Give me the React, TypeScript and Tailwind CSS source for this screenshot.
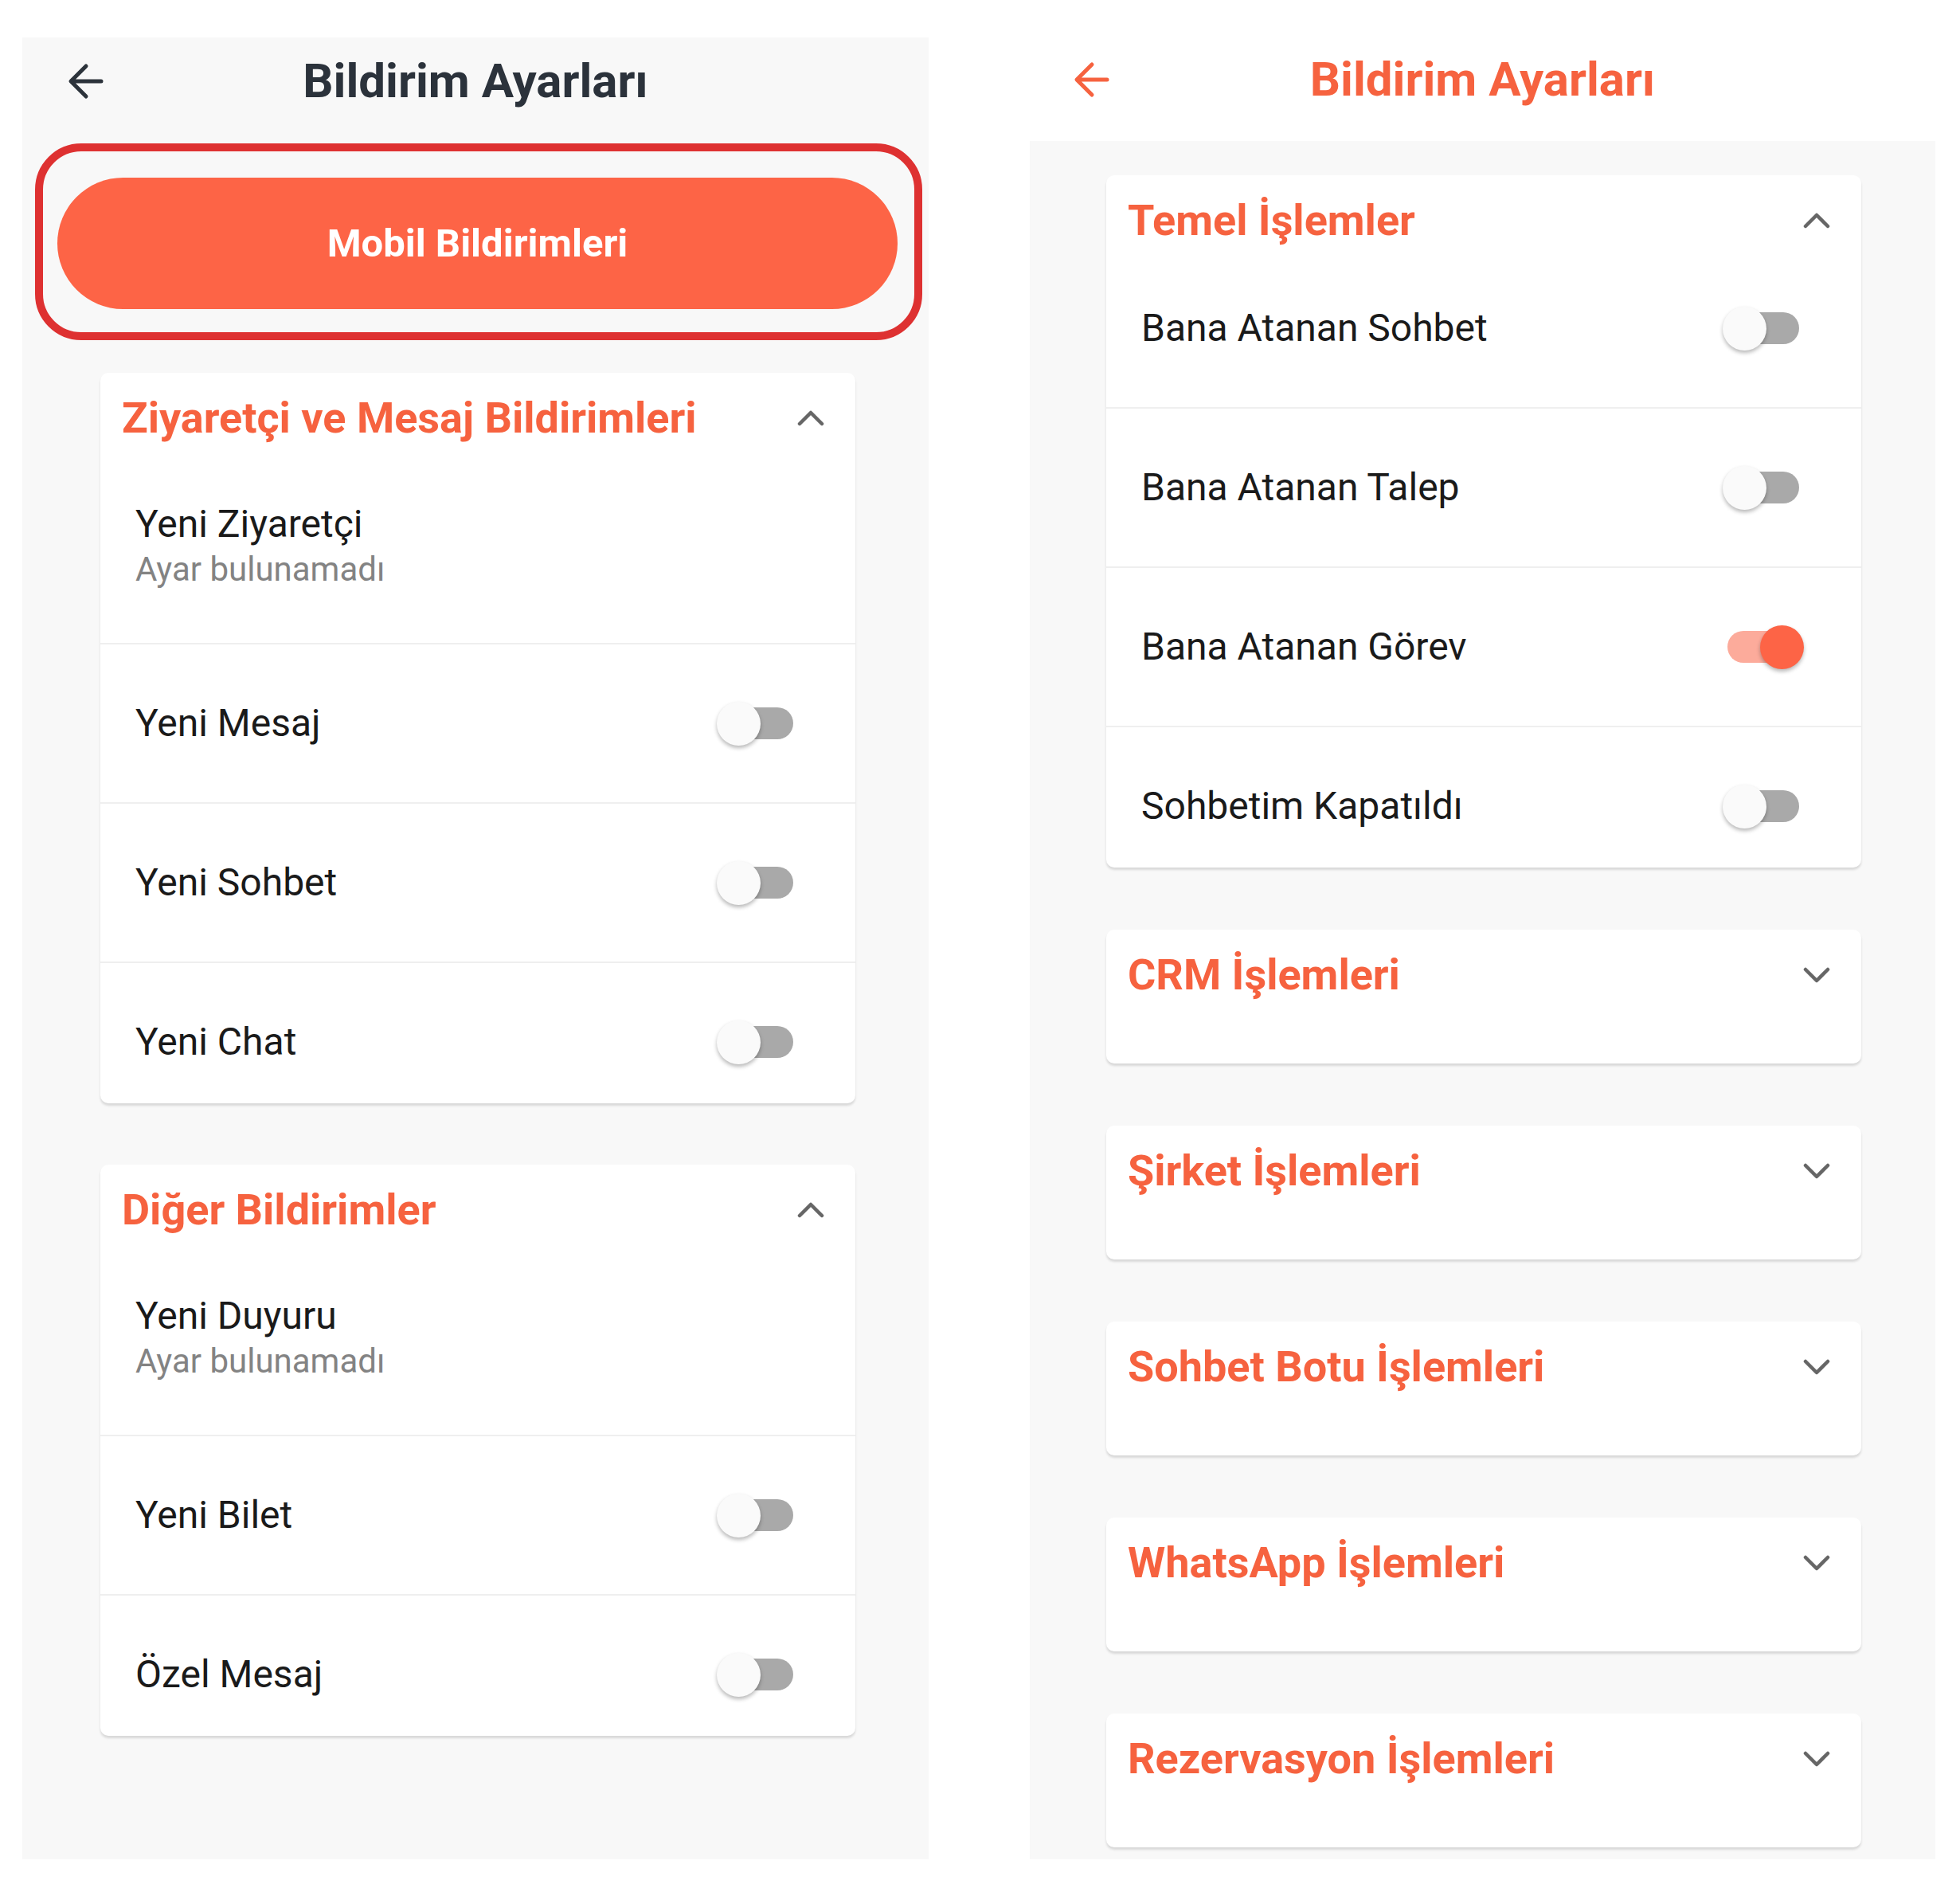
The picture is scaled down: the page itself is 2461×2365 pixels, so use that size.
import React from "react";

const CORAL = "text-[#f6623f]";

function BackArrow({ color }: { color: string }) {
  return (
    <svg width="46" height="46" viewBox="0 0 46 46" fill="none">
      <path d="M42 23H5M23 4L4 23l19 19" stroke={color} strokeWidth="5" strokeLinecap="round" strokeLinejoin="round" />
    </svg>
  );
}

function Chevron({ up }: { up: boolean }) {
  return (
    <svg width="34" height="20" viewBox="0 0 34 20" fill="none">
      {up ? (
        <path d="M3 17L17 3l14 14" stroke="#666666" strokeWidth="4.5" strokeLinecap="round" strokeLinejoin="round" />
      ) : (
        <path d="M3 3l14 14L31 3" stroke="#666666" strokeWidth="4.5" strokeLinecap="round" strokeLinejoin="round" />
      )}
    </svg>
  );
}

function Toggle({ on }: { on: boolean }) {
  return (
    <div className="relative w-[102px] h-[56px] shrink-0">
      <div
        className={
          "absolute left-[6px] right-[6px] top-[8px] h-[40px] rounded-full " +
          (on ? "bg-[#fcab9b]" : "bg-[#a9a9a9]")
        }
      />
      <div
        className={
          "absolute top-[1px] w-[55px] h-[55px] rounded-full shadow-[0_3px_5px_rgba(0,0,0,0.28)] " +
          (on ? "right-0 bg-[#fd6446]" : "left-0 bg-[#fafafa]")
        }
      />
    </div>
  );
}

type Row = { label: string; sub?: string; on?: boolean };

function CardHeader({ title, open }: { title: string; open: boolean }) {
  return (
    <div className="h-[93px] pt-[20px] pl-[27px] pr-[39px] flex items-center justify-between">
      <div className={"font-bold text-[54px] leading-none " + CORAL}>{title}</div>
      <Chevron up={open} />
    </div>
  );
}

function Card({ title, rows }: { title: string; rows: Row[] }) {
  return (
    <div className="bg-white rounded-[10px] shadow-[0_3px_3px_rgba(0,0,0,0.13)] overflow-hidden">
      <CardHeader title={title} open={true} />
      {rows.map((r, i) => {
        const last = i === rows.length - 1;
        if (r.sub) {
          return (
            <div key={i} className="h-[248px] border-b-2 border-[#efefef] pl-[44px] pt-[68px]">
              <div className="text-[48px] leading-[58px] text-[#1a1a1a]">{r.label}</div>
              <div className="mt-[3px] text-[42px] leading-[50px] text-[#838383]">{r.sub}</div>
            </div>
          );
        }
        return (
          <div
            key={i}
            className={
              "flex items-center justify-between pl-[44px] pr-[72px] " +
              (last ? "h-[176px] pt-[22px]" : "h-[200px] border-b-2 border-[#efefef]")
            }
          >
            <div className="text-[48px] leading-none text-[#1a1a1a]">{r.label}</div>
            <Toggle on={!!r.on} />
          </div>
        );
      })}
    </div>
  );
}

function Collapsed({ title }: { title: string }) {
  return (
    <div className="bg-white rounded-[10px] shadow-[0_3px_3px_rgba(0,0,0,0.13)] h-[168px]">
      <CardHeader title={title} open={false} />
    </div>
  );
}

export default function App() {
  return (
    <div
      className="w-[2461px] h-[2365px] bg-white flex items-start pl-[28px] pt-[47px] gap-[127px]"
      style={{ fontFamily: "Roboto, 'Noto Sans', sans-serif" }}
    >
      {/* Left panel */}
      <div className="w-[1138px] h-[2287px] bg-[#f8f8f8] flex flex-col">
        <div className="relative h-[110px] flex items-center justify-center">
          <div className="absolute left-[57px] top-[32px]">
            <BackArrow color="#2c333b" />
          </div>
          <div className="font-bold text-[60px] leading-none text-[#2b323b]">Bildirim Ayarları</div>
        </div>
        <div className="mt-[23px] ml-[16px] mr-[8px] border-[10px] border-[#de3131] rounded-[58px] pl-[18px] pr-[21px] pt-[33px] pb-[29px]">
          <div className="h-[165px] rounded-full bg-[#fd6446] flex items-center justify-center">
            <span className="font-bold text-[49px] leading-none text-white">Mobil Bildirimleri</span>
          </div>
        </div>
        <div className="ml-[98px] mr-[92px] mt-[41px] flex flex-col gap-[77px]">
          <Card
            title="Ziyaretçi ve Mesaj Bildirimleri"
            rows={[
              { label: "Yeni Ziyaretçi", sub: "Ayar bulunamadı" },
              { label: "Yeni Mesaj" },
              { label: "Yeni Sohbet" },
              { label: "Yeni Chat" },
            ]}
          />
          <Card
            title="Diğer Bildirimler"
            rows={[
              { label: "Yeni Duyuru", sub: "Ayar bulunamadı" },
              { label: "Yeni Bilet" },
              { label: "Özel Mesaj" },
            ]}
          />
        </div>
      </div>

      {/* Right panel */}
      <div className="w-[1137px] h-[2287px] flex flex-col">
        <div className="relative h-[130px] pb-[24px] flex items-center justify-center bg-white">
          <div className="absolute left-[55px] top-[30px]">
            <BackArrow color="#f6623f" />
          </div>
          <div className={"font-bold text-[60px] leading-none " + CORAL}>Bildirim Ayarları</div>
        </div>
        <div className="flex-1 bg-[#f8f8f8] pt-[43px] pl-[96px] pr-[93px] flex flex-col gap-[78px]">
          <Card
            title="Temel İşlemler"
            rows={[
              { label: "Bana Atanan Sohbet" },
              { label: "Bana Atanan Talep" },
              { label: "Bana Atanan Görev", on: true },
              { label: "Sohbetim Kapatıldı" },
            ]}
          />
          <Collapsed title="CRM İşlemleri" />
          <Collapsed title="Şirket İşlemleri" />
          <Collapsed title="Sohbet Botu İşlemleri" />
          <Collapsed title="WhatsApp İşlemleri" />
          <Collapsed title="Rezervasyon İşlemleri" />
        </div>
      </div>
    </div>
  );
}
